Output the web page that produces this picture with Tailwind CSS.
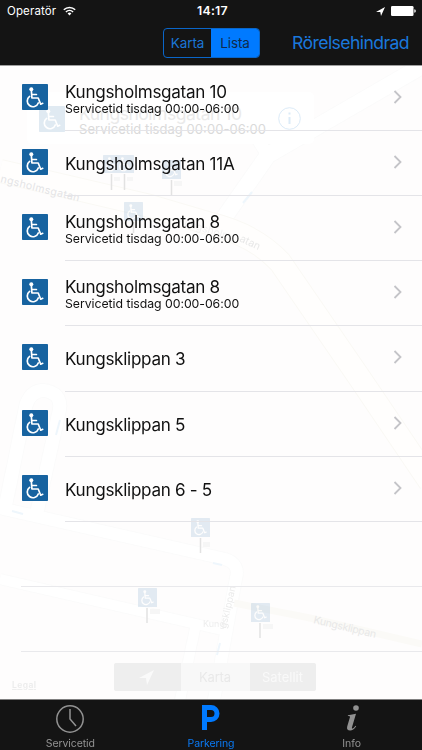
<!DOCTYPE html>
<html lang="sv">
<head>
  <meta charset="UTF-8" />
  <meta name="viewport" content="width=device-width, initial-scale=1.0" />
  <title>Parkering</title>
  <script src="https://cdn.jsdelivr.net/npm/@tailwindcss/browser@4"></script>
</head>
<body class="bg-white font-['Inter','Liberation_Sans',sans-serif]">

  <!-- Shared symbols -->
  <svg class="hidden">
    <symbol id="wheelchair" viewBox="0 0 26 26">
      <rect width="26" height="26" rx="0.8" fill="#1763a0" />
      <circle cx="9.3" cy="5.2" r="2" fill="#fff" />
      <g fill="none" stroke="#fff" stroke-width="1.7" stroke-linecap="round" stroke-linejoin="round">
        <path d="M9.400 7l.5 7h6.300l2.500 6.200 2-.9" />
        <path d="M9.800 10.500h4.600" />
        <path d="M7.600 12.400a5.700 5.700 0 1 0 8.700 6.600" />
      </g>
    </symbol>
    <symbol id="chevron" viewBox="0 0 8 14">
      <path d="M1 1l6 6-6 6" fill="none" stroke="#c4c4c8" stroke-width="1.8" />
    </symbol>
  </svg>

  <div class="relative flex h-[750px] w-[422px] flex-col overflow-hidden">

    <!-- Faded map behind the list -->
    <svg class="absolute inset-0" width="422" height="750" viewBox="0 0 422 750">
      <rect width="422" height="750" fill="#fefdfd" />
      <g fill="none" stroke-linejoin="round">
        <g stroke="#fbfbfb">
          <path d="M422 66L268 155 205 245" stroke-width="18" />
          <path d="M255 135l15 24" stroke-width="14" />
          <path d="M5 508L26 405Q32 388 47 391 63 395 59 412L37 512" stroke-width="15" />
          <path d="M0 508L225 559Q240 564 236 578L214 700" stroke-width="14" />
          <path d="M0 579L196 624 180 700M196 624l30 7" stroke-width="12" />
        </g>
        <g stroke="#fff">
          <path d="M422 66L268 155 205 245" stroke-width="16" />
          <path d="M255 135l15 24" stroke-width="12" />
          <path d="M5 508L26 405Q32 388 47 391 63 395 59 412L37 512" stroke-width="13" />
          <path d="M0 508L225 559Q240 564 236 578L214 700" stroke-width="12" />
          <path d="M0 579L196 624 180 700M196 624l30 7" stroke-width="10" />
        </g>
        <path d="M0 171L150 206 211 224Q255 235 280 262L361 380 430 482" stroke="#faf9f5" stroke-width="24" />
        <path d="M0 171L150 206 211 224Q255 235 280 262L361 380 430 482" stroke="#fffefd" stroke-width="22" />
        <path d="M234 603L310 618 422 644" stroke="#fbfaf7" stroke-width="7" />
        <path d="M243 203l9-11M56 435l4-15M12 511l11 3M213 563l9 2M217 655l3-12" stroke="#eef6fc" stroke-width="2" />
      </g>

      <!-- Callout -->
      <rect x="27" y="92" width="287" height="52" rx="5" fill="#fff" />
      <use href="#wheelchair" x="39" y="106" width="26" height="26" opacity=".13" />
      <text x="79" y="120" font-size="17.5" textLength="163" fill="#eaeaea">Kungsholmsgatan 10</text>
      <text x="79" y="134" font-size="13" textLength="187" fill="#dadada">Servicetid tisdag 00:00-06:00</text>
      <circle cx="289.500" cy="118.500" r="10.800" fill="none" stroke="#dcebf8" />
      <path d="M289.500 117v7M289.500 112.500v2" stroke="#dcebf8" stroke-width="2" />

      <!-- Pins -->
      <g opacity=".12">
        <use href="#wheelchair" x="103" y="155" width="18" height="18" />
        <use href="#wheelchair" x="116" y="155" width="18" height="18" />
        <use href="#wheelchair" x="162" y="160" width="19" height="19" />
        <use href="#wheelchair" x="124" y="202" width="19" height="19" />
        <use href="#wheelchair" x="191" y="518" width="19" height="19" />
        <use href="#wheelchair" x="138" y="588" width="19" height="19" />
        <use href="#wheelchair" x="251" y="603" width="19" height="19" />
      </g>
      <path d="M111.500 174v16M124.500 174v16M171.500 180v15M133.500 222v11M200.500 538v15M147 608v15M260 623v15" stroke="#e2e2e2" stroke-width="1.500" />
      <path d="M114 177h6v4h-6zM127 177h6v4h-6zM174 181h8v5h-8zM203 542h7v5h-7zM150 609h10v5h-10zM263 624h10v5h-10z" fill="#f6f6f6" />

      <!-- Street names -->
      <g fill="#e4e4e6" font-size="10.5">
        <text transform="translate(0 182) rotate(14)" textLength="81">ngsholmsgatan</text>
        <text transform="translate(177 224) rotate(17)" fill="#f2f2f2">Kungsholm</text>
        <text transform="translate(239 241) rotate(25)" fill="#e8e8e8">atan</text>
        <text transform="translate(313 623) rotate(13.500)" textLength="64" fill="#e8e8e8">Kungsklippan</text>
        <text transform="translate(226 629) rotate(-77)" fill="#ebebeb" font-size="9.500">gsklippan</text>
        <text x="203" y="627" fill="#eeeeee" font-size="9">Kung</text>
        <text x="12" y="688" fill="#ececec" font-size="8.500" font-weight="600" text-decoration="underline" textLength="24">Legal</text>
      </g>

      <!-- Map type buttons -->
      <rect x="114" y="663" width="202" height="28" rx="2" fill="#f8f8f8" />
      <path d="M116 663h65v28h-65q-2 0-2-2v-24q0-2 2-2zM250 663h64q2 0 2 2v24q0 2-2 2h-64z" fill="#eeeeee" />
      <path d="M139 678l15-8-7 15-1-7z" fill="#fafafa" />
      <text x="199" y="682" font-size="13" textLength="32" fill="#e9e9e9">Karta</text>
      <text x="262" y="682" font-size="13" textLength="41" fill="#f9f9f9">Satellit</text>
    </svg>

    <!-- Header -->
    <header class="relative h-[66px] shrink-0 border-b border-[#a0a0a0] bg-[#141414] text-white">
      <div class="grid h-[22px] grid-cols-3 items-center pl-[7px] pr-1.5">
        <div class="flex items-center gap-[7px] pt-px text-[11.5px] tracking-[0.13px]">
          <span>Operatör</span>
          <svg class="-mt-px" width="13" height="10" viewBox="0 0 13 10" fill="none" stroke="#fff" stroke-width="1.500">
            <path d="M.8 3.700a8.200 8.200 0 0 1 11.400 0M2.900 6a5.200 5.200 0 0 1 7.200 0" />
            <path d="M4.600 7.500L6.500 9.500 8.400 7.500a2.800 2.800 0 0 0-3.800 0z" fill="#fff" stroke="none" />
          </svg>
        </div>
        <div class="pl-[2px] text-center text-[12.3px] font-semibold tracking-[0.25px]">14:17</div>
        <div class="flex items-center justify-end gap-[6px]">
          <svg width="9" height="9" viewBox="0 0 9 9" fill="#fff"><path d="M0 5L9 0 5 9 4.300 5z" /></svg>
          <svg width="25" height="10" viewBox="0 0 25 10" fill="#fff">
            <rect width="22.500" height="10" rx="1.300" />
            <path d="M23.300 3.200q1.500.3 1.500 1.800t-1.500 1.800z" />
          </svg>
        </div>
      </div>
      <div class="grid h-[42px] grid-cols-[163px_97px_1fr] items-center">
        <div class="col-start-2 flex h-[30px] overflow-hidden rounded-[4px] border border-[#0a66c9] text-[13.5px] tracking-[-0.1px]">
          <span class="flex w-[47px] items-center justify-center text-[#1b76d6]">Karta</span>
          <span class="flex flex-1 items-center justify-center bg-[#007aff] text-[#102a4a]">Lista</span>
        </div>
        <div class="pr-[13px] text-right text-[17.6px] tracking-[-0.58px] whitespace-nowrap text-[#1a78dc]">Rörelsehindrad</div>
      </div>
    </header>

    <!-- Parking list -->
    <main id="list" class="relative min-h-0 flex-1"></main>

    <!-- Tab bar -->
    <nav class="relative grid h-[51px] shrink-0 grid-cols-3 border-t border-[#808080] bg-[#141414] text-[10.5px] leading-[13px] text-[#929292]">
      <div class="flex flex-col items-center pt-[4px]">
        <svg width="30" height="30" viewBox="0 0 30 30" fill="none" stroke="#929292">
          <circle cx="15" cy="15" r="13.200" stroke-width="1.500" />
          <path d="M15 5v10l6 7" stroke-width="1.500" />
        </svg>
        <span class="mt-[3px] tracking-[-0.1px]">Servicetid</span>
      </div>
      <div class="flex flex-col items-center pt-[4px] text-[#0a7af5]">
        <svg width="30" height="30" viewBox="0 0 30 30" fill="none" stroke="#007aff" stroke-width="5">
          <path d="M8.500 26V3.500h6.500a5 5 0 0 1 0 12h-6.500" />
        </svg>
        <span class="mt-[3px] tracking-[-0.1px]">Parkering</span>
      </div>
      <div class="flex flex-col items-center pt-[4px]">
        <svg width="30" height="30" viewBox="0 0 30 30" fill="#929292">
          <circle cx="19" cy="4" r="2.800" />
          <path d="M11 11.200l8-1.500-4 13.500q-.5 1.800.8 1.300 1.200-.5 2.700-2.700l.7.500q-3 4.300-6 4.300-4 0-3-4l2.800-9.500q.4-1.400-2.200-1.200z" />
        </svg>
        <span class="mt-[3px]">Info</span>
      </div>
    </nav>
  </div>

  <script>
    const places = [
      { name: "Kungsholmsgatan 10", time: "Servicetid tisdag 00:00-06:00" },
      { name: "Kungsholmsgatan 11A" },
      { name: "Kungsholmsgatan 8", time: "Servicetid tisdag 00:00-06:00" },
      { name: "Kungsholmsgatan 8", time: "Servicetid tisdag 00:00-06:00" },
      { name: "Kungsklippan 3" },
      { name: "Kungsklippan 5" },
      { name: "Kungsklippan 6 - 5" }
    ];

    const row = place => `
      <div class="flex h-[65.12px] items-center pl-[22px]">
        <svg class="mb-[3px] size-[26px] shrink-0"><use href="#wheelchair" /></svg>
        <div class="ml-[17px] flex h-full flex-1 items-center border-b border-[#e4e4e8] pr-[20px]">
          <div class="flex-1 pt-px text-[#111]">
            <div class="text-[17.1px] leading-[19px] tracking-[-0.3px]">${place.name}</div>
            ${place.time ? `<div class="text-[12.3px] leading-[15px] tracking-[-0.05px]">${place.time}</div>` : ""}
          </div>
          <svg class="mb-[2px] h-[14px] w-[9px]"><use href="#chevron" /></svg>
        </div>
      </div>`;

    // two empty rows fill the list down to the tab bar
    const emptyRow = `<div class="ml-[21px] h-[65.12px] border-b border-[#e9e9ec]"></div>`;

    document.getElementById("list").innerHTML = places.map(row).join("") + emptyRow.repeat(2);
  </script>
</body>
</html>
